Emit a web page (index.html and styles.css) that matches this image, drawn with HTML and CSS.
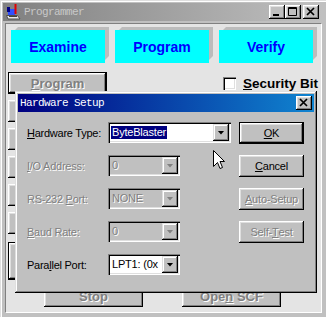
FILE: index.html
```html
<!DOCTYPE html>
<html>
<head>
<meta charset="utf-8">
<link rel="stylesheet" href="styles.css">
</head>
<body>
<div class="window">
  <div class="titlebar inactive">
    <svg class="app-icon" width="16" height="16" viewBox="0 0 16 16">
      <path d="M1.5 11.5 L12.5 11.5 L15 15 L3 15 Z" fill="#e8e8e8" stroke="#505050"/>
      <rect x="3" y="5" width="7" height="6" fill="#3050ff"/>
      <rect x="2" y="3" width="3" height="5" fill="#000080"/>
      <path d="M10.5 0 L10.5 10" stroke="#e00000" stroke-width="2"/>
      <rect x="4" y="12" width="8" height="1" fill="#404040"/>
    </svg>
    <span class="title">Programmer</span>
    <div class="tb-buttons">
      <span class="tb-btn"><svg width="16" height="14" viewBox="0 0 16 14"><rect x="4" y="9" width="6" height="2" fill="#000"/></svg></span>
      <span class="tb-btn"><svg width="16" height="14" viewBox="0 0 16 14"><path d="M3.5 2.5 H11.5 V10.5 H3.5 Z M3 3.5 H12" fill="none" stroke="#000"/></svg></span>
      <span class="tb-btn close"><svg width="16" height="14" viewBox="0 0 16 14"><path d="M4 3 L11 10 M11 3 L4 10" stroke="#000" stroke-width="1.7"/></svg></span>
    </div>
  </div>
  <div class="client">
    <div class="action-row">
      <div class="action">Examine</div>
      <div class="action">Program</div>
      <div class="action">Verify</div>
    </div>
    <div class="main-row">
      <div class="left-col">
        <div class="btn default bold disabled"><u>P</u>rogram</div>
        <div class="btn"></div>
        <div class="btn"></div>
        <div class="btn"></div>
        <div class="btn"></div>
        <div class="btn"></div>
        <div class="btn default tall"></div>
      </div>
      <div class="security"><span class="checkbox"></span><span><u>S</u>ecurity Bit</span></div>
    </div>
    <div class="bottom-row">
      <div class="btn wide bold disabled">Stop</div>
      <div class="btn wide bold disabled">Ope<u>n</u> SCF</div>
    </div>
  </div>

  <div class="dialog">
    <div class="titlebar active">
      <span class="title">Hardware Setup</span>
      <span class="tb-btn close"><svg width="16" height="14" viewBox="0 0 16 14"><path d="M4 3 L11 10 M11 3 L4 10" stroke="#000" stroke-width="1.7"/></svg></span>
    </div>
    <div class="dlg-body">
      <span class="lbl"><u>H</u>ardware Type:</span>
      <div class="combo wide"><span class="sel">ByteBlaster</span><span class="drop"></span></div>
      <div class="btn default">  <u>O</u>K</div>

      <span class="lbl disabled"><u>I</u>/O Address:</span>
      <div class="combo off"><span class="val">0</span><span class="drop"></span></div>
      <div class="btn"><u>C</u>ancel</div>

      <span class="lbl disabled">RS-232 <u>P</u>ort:</span>
      <div class="combo off"><span class="val">NONE</span><span class="drop"></span></div>
      <div class="btn disabled"><u>A</u>uto-Setup</div>

      <span class="lbl disabled"><u>B</u>aud Rate:</span>
      <div class="combo off"><span class="val">0</span><span class="drop"></span></div>
      <div class="btn disabled">Self-<u>T</u>est</div>

      <span class="lbl">Para<u>l</u>lel Port:</span>
      <div class="combo"><span class="val">LPT1: (0x</span><span class="drop"></span></div>
    </div>
  </div>

  <svg class="cursor" width="12" height="19" viewBox="0 0 12 19">
    <path d="M0.5 0.5 V16.5 L4.5 12.5 L7 18.5 L9.5 17.5 L7 11.5 H11.5 Z" fill="#fff" stroke="#000"/>
  </svg>
</div>
</body>
</html>
```

FILE: styles.css
```css
body {
  margin: 0;
  background: #c0c0c0;
}

.window {
  position: relative;
  width: 326px;
  height: 317px;
  box-sizing: border-box;
  padding: 3px 4px 4px 3px;
  background: #c0c0c0;
  box-shadow: inset 1px 1px #dfdfdf, inset 2px 2px #fff;
  display: flex;
  flex-direction: column;
  overflow: hidden;
  font-family: "Liberation Sans", Arial, sans-serif;
  font-size: 11px;
  color: #000;
}

.titlebar {
  flex: none;
  height: 18px;
  display: flex;
  align-items: center;
  padding: 0 3px 0 2px;
}

.titlebar.inactive {
  background: linear-gradient(90deg, #808080, #c0c0c0);
}

.titlebar.active {
  background: linear-gradient(90deg, #000080, #1084d0);
  padding-right: 2px;
}

.app-icon {
  flex: none;
  display: block;
}

.title {
  font-family: "Liberation Mono", "DejaVu Sans Mono", monospace;
  font-size: 11px;
  letter-spacing: -0.6px;
  line-height: 18px;
  white-space: nowrap;
}

.inactive .title {
  margin-left: 3px;
  color: #c8c8c8;
}

.active .title {
  color: #fff;
}

.tb-buttons {
  margin-left: auto;
  display: flex;
}

.tb-btn {
  width: 16px;
  height: 14px;
  background: #c0c0c0;
  box-shadow: inset -1px -1px #000, inset 1px 1px #fff, inset -2px -2px #808080, inset 2px 2px #dfdfdf;
  display: block;
}

.tb-btn svg {
  display: block;
}

.tb-btn.close {
  margin-left: 2px;
}

.active .tb-btn.close {
  margin-left: auto;
}

.client {
  flex: 1;
  margin: 2px 0 0 2px;
  border: 1px solid;
  border-color: #808080 #fff #fff #808080;
  background: #e4e4e4;
  display: flex;
  flex-direction: column;
}

.action-row {
  display: flex;
  gap: 10px;
  margin: 6px 0 0 5px;
  position: relative;
  z-index: 0;
}

.action {
  position: relative;
  width: 94px;
  height: 33px;
  background: #00ffff;
  color: #0000ff;
  font-weight: bold;
  font-size: 14px;
  display: flex;
  align-items: center;
  justify-content: center;
}

.action::before {
  content: "";
  position: absolute;
  inset: 0;
  transform: translate(4px, -3px);
  background: #bcbcbc;
  z-index: -1;
  clip-path: polygon(0 3px, 3px 0, 100% 0, 100% calc(100% - 4px), calc(100% - 4px) 100%, 0 100%);
}

.btn {
  box-sizing: border-box;
  height: 22px;
  background: #c0c0c0;
  box-shadow: inset -1px -1px #000, inset 1px 1px #fff, inset -2px -2px #808080, inset 2px 2px #dfdfdf;
  display: flex;
  align-items: center;
  justify-content: center;
  white-space: pre;
  font-size: 11px;
  letter-spacing: -0.2px;
}

.btn.default {
  border: 1px solid #000;
}

.btn.bold {
  font-weight: bold;
  font-size: 13px;
  letter-spacing: 0;
}

.disabled {
  color: #808080;
  text-shadow: 1px 1px 0 #fff;
}

.main-row {
  display: flex;
  margin-top: 9px;
}

.left-col {
  margin-left: 2px;
  width: 99px;
  display: flex;
  flex-direction: column;
  gap: 6px;
}

.left-col .tall {
  height: 38px;
  margin-top: 2px;
}

.security {
  margin: 5px 0 0 116px;
  height: 13px;
  display: flex;
  align-items: center;
  gap: 7px;
  font-weight: bold;
  font-size: 13.5px;
  white-space: nowrap;
}

.checkbox {
  width: 13px;
  height: 13px;
  flex: none;
  background: #fff;
  box-shadow: inset 1px 1px #808080, inset 2px 2px #000, inset -1px -1px #fff, inset -2px -2px #dfdfdf;
}

.bottom-row {
  display: flex;
  gap: 39px;
  margin: 5px 0 0 38px;
}

.btn.wide {
  width: 99px;
}

.dialog {
  position: absolute;
  left: 15px;
  top: 91px;
  width: 302px;
  height: 202px;
  box-sizing: border-box;
  padding: 3px;
  background: #c0c0c0;
  box-shadow: inset -1px -1px #000, inset 1px 1px #dfdfdf, inset -2px -2px #808080, inset 2px 2px #fff;
}

.dlg-body {
  display: grid;
  grid-template-columns: 81px 131px 65px;
  grid-auto-rows: 22px;
  row-gap: 11px;
  padding: 10px 0 0 9px;
  align-items: center;
}

.lbl {
  white-space: nowrap;
  letter-spacing: -0.25px;
  line-height: 13px;
}

.combo {
  align-self: start;
  box-sizing: border-box;
  width: 72px;
  height: 21px;
  background: #fff;
  box-shadow: inset 1px 1px #808080, inset 2px 2px #000, inset -1px -1px #fff, inset -2px -2px #dfdfdf;
  display: flex;
  align-items: center;
  padding: 2px;
  overflow: hidden;
  letter-spacing: -0.2px;
}

.combo.wide {
  width: 123px;
}

.combo.off {
  background: #c0c0c0;
  color: #808080;
}

.combo.off .val {
  text-shadow: 1px 1px 0 #fff;
}

.sel {
  margin-left: 1px;
  padding: 0 1px;
  line-height: 13px;
  background: #000080;
  color: #fff;
  white-space: nowrap;
}

.val {
  margin-left: 2px;
  flex: 1;
  white-space: nowrap;
  line-height: 13px;
}

.drop {
  margin-left: auto;
  flex: none;
  width: 16px;
  height: 17px;
  background: #c0c0c0;
  box-shadow: inset -1px -1px #000, inset 1px 1px #dfdfdf, inset -2px -2px #808080, inset 2px 2px #fff;
  display: flex;
  align-items: center;
  justify-content: center;
}

.drop::after {
  content: "";
  width: 7px;
  height: 4px;
  background: #000;
  clip-path: polygon(0 0, 100% 0, 50% 100%);
}

.combo.off .drop::after {
  background: #808080;
}

.cursor {
  position: absolute;
  left: 213px;
  top: 150px;
  display: block;
}
```
